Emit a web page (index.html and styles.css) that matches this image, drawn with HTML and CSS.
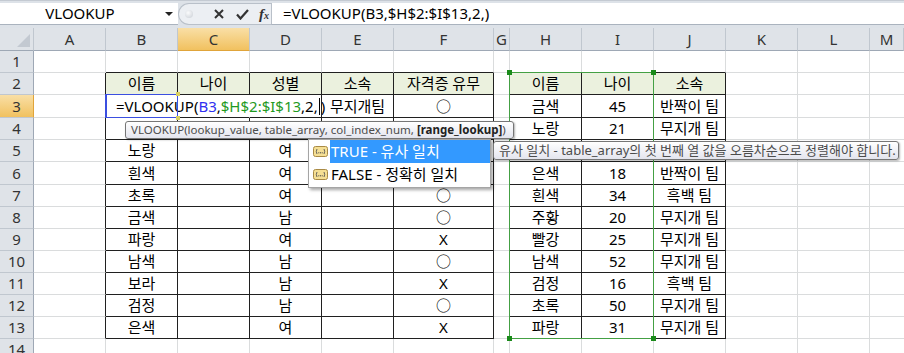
FILE: index.html
```html
<!DOCTYPE html>
<html lang="ko">
<head>
    <meta charset="UTF-8">
    <meta name="viewport" content="width=device-width, initial-scale=1.0">
    <title>VLOOKUP</title>
    <link rel="stylesheet" href="styles.css">
</head>
<body>
    <div class="formula-bar">
        <div class="name-box">
            <span class="name">VLOOKUP</span>
            <span class="drop-arrow"></span>
        </div>
        <div class="fx-tools">
            <span class="grip"></span>
            <svg class="btn-x" width="10" height="10" viewBox="0 0 10 10"><path d="M1 1 L9 9 M9 1 L1 9" stroke="#333" stroke-width="2"/></svg>
            <svg class="btn-ok" width="13" height="11" viewBox="0 0 13 11"><path d="M1 5.5 L4.5 9.5 L12 1" fill="none" stroke="#333" stroke-width="2.2"/></svg>
            <span class="btn-fx">f<span class="sub">x</span></span>
        </div>
        <div class="formula-input">=VLOOKUP(B3,$H$2:$I$13,2,)</div>
    </div>

    <div class="sheet">
        <div class="grid" id="grid"></div>

        <div class="ref-box ref-blue">
            <span class="handle tr"></span>
            <span class="handle br"></span>
        </div>
        <div class="ref-box ref-green">
            <span class="handle tl"></span>
            <span class="handle tr"></span>
            <span class="handle bl"></span>
            <span class="handle br"></span>
        </div>

        <div class="tooltip tip-args">VLOOKUP(lookup_value, table_array, col_index_num, <b>[range_lookup]</b>)</div>

        <div class="dropdown">
            <div class="opt active">
                <svg class="opt-icon" width="15" height="11" viewBox="0 0 15 11"><rect x="0.5" y="0.5" width="14" height="10" rx="2" fill="#f5df94" stroke="#a98a45"/><path d="M4 3 Q2.6 5.5 4 8 M11 3 Q12.4 5.5 11 8" fill="none" stroke="#555" stroke-width="0.9"/><rect x="5.3" y="6.3" width="1" height="1" fill="#444"/><rect x="7" y="6.3" width="1" height="1" fill="#444"/><rect x="8.7" y="6.3" width="1" height="1" fill="#444"/></svg>
                <span class="opt-label">TRUE - 유사 일치</span>
            </div>
            <div class="opt">
                <svg class="opt-icon" width="15" height="11" viewBox="0 0 15 11"><rect x="0.5" y="0.5" width="14" height="10" rx="2" fill="#f5df94" stroke="#a98a45"/><path d="M4 3 Q2.6 5.5 4 8 M11 3 Q12.4 5.5 11 8" fill="none" stroke="#555" stroke-width="0.9"/><rect x="5.3" y="6.3" width="1" height="1" fill="#444"/><rect x="7" y="6.3" width="1" height="1" fill="#444"/><rect x="8.7" y="6.3" width="1" height="1" fill="#444"/></svg>
                <span class="opt-label">FALSE - 정확히 일치</span>
            </div>
        </div>

        <div class="tooltip tip-desc">유사 일치 - table_array의 첫 번째 열 값을 오름차순으로 정렬해야 합니다.</div>
    </div>

    <script>
        const letters = ['A', 'B', 'C', 'D', 'E', 'F', 'G', 'H', 'I', 'J', 'K', 'L', 'M'];

        // columns B..F
        const people = {
            2: ['이름', '나이', '성별', '소속', '자격증 유무'],
            3: ['', '', '', '무지개팀', '○'],
            4: ['', '', '', '', ''],
            5: ['노랑', '', '여', '', ''],
            6: ['흰색', '', '여', '', ''],
            7: ['초록', '', '여', '', '○'],
            8: ['금색', '', '남', '', '○'],
            9: ['파랑', '', '여', '', 'X'],
            10: ['남색', '', '남', '', '○'],
            11: ['보라', '', '남', '', 'X'],
            12: ['검정', '', '남', '', '○'],
            13: ['은색', '', '여', '', 'X']
        };

        // columns H..J
        const lookup = {
            2: ['이름', '나이', '소속'],
            3: ['금색', '45', '반짝이 팀'],
            4: ['노랑', '21', '무지개 팀'],
            5: ['', '', ''],
            6: ['은색', '18', '반짝이 팀'],
            7: ['흰색', '34', '흑백 팀'],
            8: ['주황', '20', '무지개 팀'],
            9: ['빨강', '25', '무지개 팀'],
            10: ['남색', '52', '무지개 팀'],
            11: ['검정', '16', '흑백 팀'],
            12: ['초록', '50', '무지개 팀'],
            13: ['파랑', '31', '무지개 팀']
        };

        const grid = document.getElementById('grid');

        function addCell(cls, html) {
            const div = document.createElement('div');
            div.className = 'cell ' + cls;
            div.innerHTML = html || '';
            grid.appendChild(div);
            return div;
        }

        addCell('head corner');
        letters.forEach(l => addCell('head' + (l === 'C' ? ' sel' : ''), l));

        for (let r = 1; r <= 14; r++) {
            addCell('row-head' + (r === 3 ? ' sel' : ''), r);
            letters.forEach((l, i) => {
                let cls = '';
                let text = '';
                const inTable = r >= 2 && r <= 13;
                if (inTable && i >= 1 && i <= 5) {
                    cls = 't' + (r === 2 ? ' th' : '');
                    text = people[r][i - 1];
                } else if (inTable && i >= 7 && i <= 9) {
                    cls = 't' + (r === 2 ? ' th' : '');
                    text = lookup[r][i - 7];
                } else if (inTable && (l === 'A' || l === 'G')) {
                    cls = 'tl';
                } else if (r === 1 && ((i >= 1 && i <= 5) || (i >= 7 && i <= 9))) {
                    cls = 'tt';
                }
                if (l === 'M') cls += ' last';
                if (r === 3 && l === 'B') {
                    cls += ' edit';
                    text = '=VLOOKUP(<span class="ref-b">B3</span>,<span class="ref-g">$H$2:$I$13</span>,2,<span class="caret"></span>)';
                }
                if (r === 3 && l === 'C') cls += ' ov';
                addCell(cls, text);
            });
        }
    </script>
</body>
</html>
```

FILE: styles.css
```css
* {
    margin: 0;
    padding: 0;
    box-sizing: border-box;
}

body {
    width: 904px;
    height: 353px;
    overflow: hidden;
    background-color: #fff;
    color: #000;
    font-family: "Noto Sans", "Noto Sans CJK KR", sans-serif;
}

/* formula bar */

.formula-bar {
    display: flex;
    height: 28px;
    padding: 2px 0 3px;
    background-color: #dde2e8;
    border-top: 1px solid #c4cad2;
}

.name-box {
    position: relative;
    width: 178px;
    background-color: #fff;
    border-bottom: 1px solid #aab3be;
}

.name {
    display: block;
    width: 160px;
    text-align: center;
    font-size: 15px;
    line-height: 21px;
}

.drop-arrow {
    position: absolute;
    left: 165px;
    top: 9px;
    border-left: 4px solid transparent;
    border-right: 4px solid transparent;
    border-top: 4px solid #222;
}

.fx-tools {
    display: flex;
    align-items: center;
    width: 93px;
    background-color: #eceff3;
    border: 1px solid #b9c0c9;
    border-right: none;
    border-radius: 11px 0 0 11px;
}

.grip {
    width: 8px;
    height: 8px;
    margin-left: 6px;
    border-radius: 50%;
    background: radial-gradient(circle at 40% 35%, #fafbfc, #c9ced5);
}

.btn-x {
    margin-left: 21px;
}

.btn-ok {
    margin-left: 12px;
}

.btn-fx {
    margin-left: 10px;
    font-family: "Liberation Serif", serif;
    font-style: italic;
    font-weight: bold;
    font-size: 15px;
    color: #333;
}

.btn-fx .sub {
    font-size: 10px;
}

.formula-input {
    flex: 1;
    padding-left: 11px;
    font-size: 15px;
    line-height: 21px;
    background-color: #fff;
    border-left: 1px solid #b9c0c9;
    border-bottom: 1px solid #aab3be;
}

/* sheet */

.sheet {
    position: relative;
}

.grid {
    display: grid;
    grid-template-columns: 34px repeat(5, 72px) 100px 16px repeat(5, 72px) 34px;
    grid-template-rows: 23px 22px 22px 23px 22px 22px 23px repeat(8, 22px);
}

.cell {
    display: flex;
    align-items: center;
    justify-content: center;
    font-size: 15px;
    line-height: 1;
    white-space: nowrap;
    border-right: 1px solid #dadcdd;
    border-bottom: 1px solid #dadcdd;
}

.cell.last {
    border-right: none;
}

.head,
.row-head {
    background-color: #dfe3e8;
    color: #333;
    border-right-color: #c0c7cf;
    border-bottom-color: #9ea8b5;
}

.row-head {
    border-right-color: #9ea8b5;
    border-bottom-color: #c0c7cf;
}

.head.sel,
.row-head.sel {
    background: linear-gradient(#f9dfa6, #f1c15f);
}

.head.sel {
    border-bottom-color: #e0a43a;
}

.row-head.sel {
    border-right-color: #e0a43a;
}

.corner {
    position: relative;
}

.corner::after {
    content: "";
    position: absolute;
    right: 3px;
    bottom: 3px;
    border-left: 13px solid transparent;
    border-bottom: 13px solid #c3c9d1;
}

.t {
    border-right-color: #202020;
    border-bottom-color: #202020;
}

.th {
    background-color: #ebf1de;
}

.tl {
    border-right-color: #202020;
}

.tt {
    border-bottom-color: #202020;
}

.edit {
    justify-content: flex-start;
    padding-left: 10px;
    border-right-color: transparent;
}

.ov {
    border-right-color: transparent;
}

.ref-b {
    color: #3030f0;
}

.ref-g {
    color: #1f9a1f;
}

.caret {
    display: inline-block;
    width: 0;
    height: 17px;
    margin: 0 1px;
    vertical-align: -3px;
    border-left: 1px solid #000;
}

/* range highlights */

.ref-box {
    position: absolute;
}

.ref-blue {
    left: 105px;
    top: 66px;
    width: 73px;
    height: 24px;
    border: 1px solid #3b4fe0;
    border-left-width: 2px;
}

.ref-green {
    left: 509px;
    top: 44px;
    width: 145px;
    height: 267px;
    border: 1px solid #44a044;
}

.handle {
    position: absolute;
    width: 5px;
    height: 5px;
    background-color: #1a8a1a;
}

.ref-blue .handle {
    width: 4px;
    height: 4px;
    background-color: #d8cf62;
}

.handle.tl { left: -3px; top: -3px; }
.handle.tr { right: -3px; top: -3px; }
.handle.bl { left: -3px; bottom: -3px; }
.handle.br { right: -3px; bottom: -3px; }

/* popups */

.tooltip {
    position: absolute;
    padding-left: 5px;
    font-size: 12px;
    line-height: 16px;
    color: #4c4c4c;
    white-space: nowrap;
    background: linear-gradient(#ffffff, #e4e5ee);
    border: 1px solid #767676;
    border-radius: 3px;
    box-shadow: 1px 1px 2px rgba(0, 0, 0, 0.3);
}

.tooltip b {
    color: #222;
}

.tip-args {
    left: 125px;
    top: 93px;
    width: 389px;
    height: 18px;
    font-size: 11.5px;
}

.tip-desc {
    left: 493px;
    top: 113px;
    width: 406px;
    height: 19px;
    font-size: 13px;
    line-height: 17px;
}

.dropdown {
    position: absolute;
    left: 308px;
    top: 111px;
    width: 183px;
    height: 49px;
    background-color: #fff;
    border: 1px solid #a5a5a5;
    box-shadow: 2px 2px 3px rgba(0, 0, 0, 0.35);
}

.opt {
    display: flex;
    align-items: center;
    height: 23px;
}

.opt-icon {
    margin: 0 2px 0 4px;
}

.opt-label {
    flex: 1;
    height: 100%;
    padding-left: 1px;
    font-size: 15px;
    line-height: 23px;
}

.opt.active .opt-label {
    color: #fff;
    background-color: #3399ff;
}
```
